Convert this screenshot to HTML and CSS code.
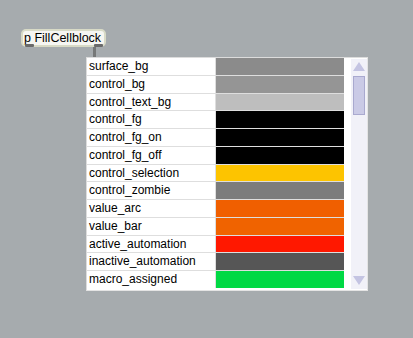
FILE: index.html
```html
<!DOCTYPE html>
<html lang="en">

<head>
    <meta charset="UTF-8">
    <meta name="viewport" content="width=device-width, initial-scale=1.0">
    <title>FillCellblock</title>
    <link rel="stylesheet" href="styles.css">
</head>

<body>

    <div class="patcher">
        <div class="objbox">
            p FillCellblock
            <span class="port inlet"></span>
            <span class="port outlet"></span>
        </div>
        <div class="cord"></div>

        <div class="cellblock">
            <div class="cells">
                <div class="label">surface_bg</div><div class="swatch sw-surface"></div>
                <div class="label">control_bg</div><div class="swatch sw-control"></div>
                <div class="label">control_text_bg</div><div class="swatch sw-text"></div>
                <div class="label">control_fg</div><div class="swatch sw-black"></div>
                <div class="label">control_fg_on</div><div class="swatch sw-black"></div>
                <div class="label">control_fg_off</div><div class="swatch sw-black"></div>
                <div class="label">control_selection</div><div class="swatch sw-selection"></div>
                <div class="label">control_zombie</div><div class="swatch sw-zombie"></div>
                <div class="label">value_arc</div><div class="swatch sw-arc"></div>
                <div class="label">value_bar</div><div class="swatch sw-bar"></div>
                <div class="label">active_automation</div><div class="swatch sw-active"></div>
                <div class="label">inactive_automation</div><div class="swatch sw-inactive"></div>
                <div class="label">macro_assigned</div><div class="swatch sw-macro"></div>
            </div>
            <div class="scrollbar">
                <div class="arrow up"></div>
                <div class="track">
                    <div class="thumb"></div>
                </div>
                <div class="arrow down"></div>
            </div>
        </div>
    </div>

</body>

</html>
```

FILE: styles.css
```css
html, body {
    margin: 0;
    height: 100%;
}

body {
    background-color: #a6abae;
    font-family: "Liberation Sans", Arial, sans-serif;
}

.patcher {
    position: relative;
    width: 413px;
    height: 338px;
}

.objbox {
    position: absolute;
    left: 21px;
    top: 29px;
    height: 14px;
    padding: 0 3px 0 1px;
    border: 2px solid #d8dac6;
    border-radius: 5px;
    background-color: #f6f6f2;
    font-size: 12.5px;
    line-height: 14px;
    color: #000;
    white-space: nowrap;
}

.port {
    position: absolute;
    bottom: -2px;
    width: 9px;
    height: 3px;
    border-radius: 1px;
    background-color: #6a6a6a;
}

.inlet {
    left: 2px;
}

.outlet {
    right: 1px;
}

.cord {
    position: absolute;
    left: 93px;
    top: 47px;
    width: 3px;
    height: 10px;
    background-color: #767878;
}

.cellblock {
    position: absolute;
    left: 86px;
    top: 57px;
    display: flex;
    width: 279px;
    height: 230px;
    padding: 1px 0 1px 1px;
    background-color: #fff;
    border: 1px solid #e4e4e4;
    border-left-color: #dcdcdc;
    border-top-color: #dcdcdc;
}

.cells {
    display: grid;
    grid-template-columns: 128px 128px;
    grid-template-rows: repeat(13, 1fr);
    gap: 1px;
    height: 230px;
    background-color: #dedede;
    margin: -1px 0 0 -1px;
}

.label {
    background-color: #fff;
    font-size: 12px;
    line-height: 17px;
    padding-left: 2px;
    color: #000;
    white-space: nowrap;
    overflow: hidden;
}

.swatch {
    background-color: #888;
}

.sw-surface { background-color: #8b8b8b; }
.sw-control { background-color: #959595; }
.sw-text { background-color: #bebebe; }
.sw-black { background-color: #000; }
.sw-selection { background-color: #fdc400; }
.sw-zombie { background-color: #7c7c7c; }
.sw-arc { background-color: #f05f00; }
.sw-bar { background-color: #f06300; }
.sw-active { background-color: #ff1800; }
.sw-inactive { background-color: #565656; }
.sw-macro { background-color: #00d944; }

.scrollbar {
    display: flex;
    flex-direction: column;
    width: 16px;
    margin-left: 7px;
    background-color: #f1f1f8;
}

.arrow {
    width: 0;
    height: 0;
    margin: 3px auto;
    border-left: 6px solid transparent;
    border-right: 6px solid transparent;
}

.arrow.up {
    border-bottom: 9px solid #c4c4e2;
}

.arrow.down {
    border-top: 9px solid #c4c4e2;
    margin-bottom: 4px;
}

.track {
    flex: 1;
    padding: 2px 2px;
}

.thumb {
    height: 37px;
    background-color: #cacae6;
    border: 1px solid #a9a9cf;
}
```
